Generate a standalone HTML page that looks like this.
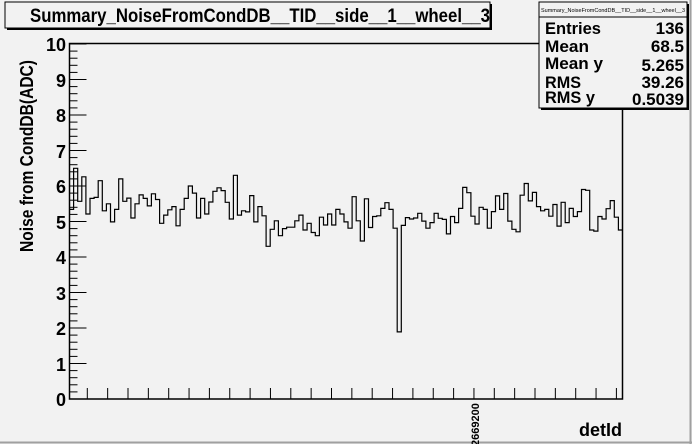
<!DOCTYPE html>
<html><head><meta charset="utf-8"><style>
html,body{margin:0;padding:0;background:#f2f2f2;}
body{width:692px;height:444px;overflow:hidden;position:relative;font-family:"Liberation Sans",Arial,sans-serif;}
svg{position:absolute;left:0;top:0;}
text{font-family:"Liberation Sans",Arial,sans-serif;font-weight:bold;fill:#000;}
</style></head><body>
<svg id="s" width="692" height="444" viewBox="0 0 692 444">
<rect x="0" y="0" width="692" height="444" fill="#f2f2f2"/>
<line x1="690.5" y1="0" x2="690.5" y2="444" stroke="#a0a0a0" stroke-width="2"/>
<line x1="0" y1="442.5" x2="692" y2="442.5" stroke="#a0a0a0" stroke-width="2"/>
<rect x="69.5" y="43.5" width="553" height="355.5" fill="none" stroke="#000" stroke-width="1.5"/>
<g id="ticks" stroke="#000" stroke-width="1"></g>
<path id="h" fill="none" stroke="#000" stroke-width="1.2"/>
<g font-size="18" text-anchor="end">
<text x="66" y="406">0</text><text x="66" y="371">1</text><text x="66" y="335">2</text>
<text x="66" y="300">3</text><text x="66" y="264">4</text><text x="66" y="229">5</text>
<text x="66" y="193">6</text><text x="66" y="158">7</text><text x="66" y="122">8</text>
<text x="66" y="87">9</text><text x="66" y="51">10</text>
</g>
<text transform="translate(33,252) rotate(-90)" font-size="18" textLength="192" lengthAdjust="spacingAndGlyphs">Noise from CondDB(ADC)</text>
<text transform="translate(479,446) rotate(-90)" font-size="11">2669200</text>
<text x="622" y="436" font-size="18" text-anchor="end">detId</text>
<rect x="7" y="4" width="485" height="26" fill="#000"/>
<rect x="5" y="2" width="485" height="26" fill="#f2f2f2" stroke="#000" stroke-width="1"/>
<text x="30" y="22" font-size="19" textLength="460" lengthAdjust="spacingAndGlyphs">Summary_NoiseFromCondDB__TID__side__1__wheel__3</text>
<rect x="541" y="4" width="148" height="106" fill="#000"/>
<rect x="539" y="2" width="148" height="106" fill="#f2f2f2" stroke="#000" stroke-width="1"/>
<line x1="539" y1="17" x2="687" y2="17" stroke="#000"/>
<text x="541" y="12" font-size="5" textLength="144" lengthAdjust="spacingAndGlyphs" style="font-weight:normal">Summary_NoiseFromCondDB__TID__side__1__wheel__3</text>
<g font-size="17">
<text x="545" y="34" textLength="56" lengthAdjust="spacingAndGlyphs">Entries</text><text x="684" y="34" text-anchor="end">136</text>
<text x="545" y="52" textLength="44" lengthAdjust="spacingAndGlyphs">Mean</text><text x="684" y="52" text-anchor="end">68.5</text>
<text x="545" y="69" textLength="58" lengthAdjust="spacingAndGlyphs">Mean y</text><text x="684" y="71" text-anchor="end">5.265</text>
<text x="545" y="88" textLength="36" lengthAdjust="spacingAndGlyphs">RMS</text><text x="684" y="88" text-anchor="end">39.26</text>
<text x="545" y="103" textLength="50" lengthAdjust="spacingAndGlyphs">RMS y</text><text x="684" y="105" text-anchor="end">0.5039</text>
</g>
</svg>
<script>
var v=[5.34,6.5,5.57,6.26,5.21,5.65,5.68,6.15,5.3,5.5,4.99,5.34,6.2,5.57,5.66,5.1,5.5,5.75,5.65,5.44,5.78,5.62,4.95,5.18,5.33,5.42,4.88,5.34,5.65,6.0,5.8,5.1,5.65,5.21,5.55,5.85,5.95,5.87,5.54,5.07,6.3,5.18,5.3,5.27,5.73,4.99,5.42,5.16,4.3,4.78,5.02,4.6,4.8,4.84,4.84,5.02,5.18,4.76,4.95,4.69,4.6,5.12,4.9,5.21,4.9,5.34,5.21,4.99,
4.81,5.70,5.02,4.45,5.64,4.83,5.14,5.16,5.37,5.53,5.34,4.81,1.89,4.89,5.11,5.07,5.1,5.23,5.01,4.81,4.97,5.23,5.09,5.06,4.65,5.14,4.97,5.37,5.96,5.81,5.15,4.93,5.4,5.34,4.81,5.28,5.72,5.34,5.79,5.01,4.78,4.71,5.74,6.07,5.58,5.82,5.42,5.3,5.34,5.15,5.48,4.87,5.54,4.97,5.37,5.14,5.28,5.9,5.88,4.76,4.73,5.14,5.07,5.36,5.59,5.12,4.76];
var n=v.length,x0=69.5,W=553,w=W/n,d="";
for(var i=0;i<n;i++){var y=(399-v[i]*35.5).toFixed(1),xa=(x0+i*w).toFixed(1),xb=(x0+(i+1)*w).toFixed(1);
d+=(i==0?"M"+xa+" "+y:"L"+xa+" "+y)+"L"+xb+" "+y;}
document.getElementById("h").setAttribute("d",d);
var t="";
for(var k=0;k<=50;k++){var y=399-k*7.1;var L=(k%5==0)?17:8;t+='<line x1="69.5" y1="'+y+'" x2="'+(69.5+L)+'" y2="'+y+'"/>';}
for(var x=87.3;x<622;x+=20.35){t+='<line x1="'+x+'" y1="388" x2="'+x+'" y2="399"/>';}
document.getElementById("ticks").innerHTML=t;
</script>
</body></html>
